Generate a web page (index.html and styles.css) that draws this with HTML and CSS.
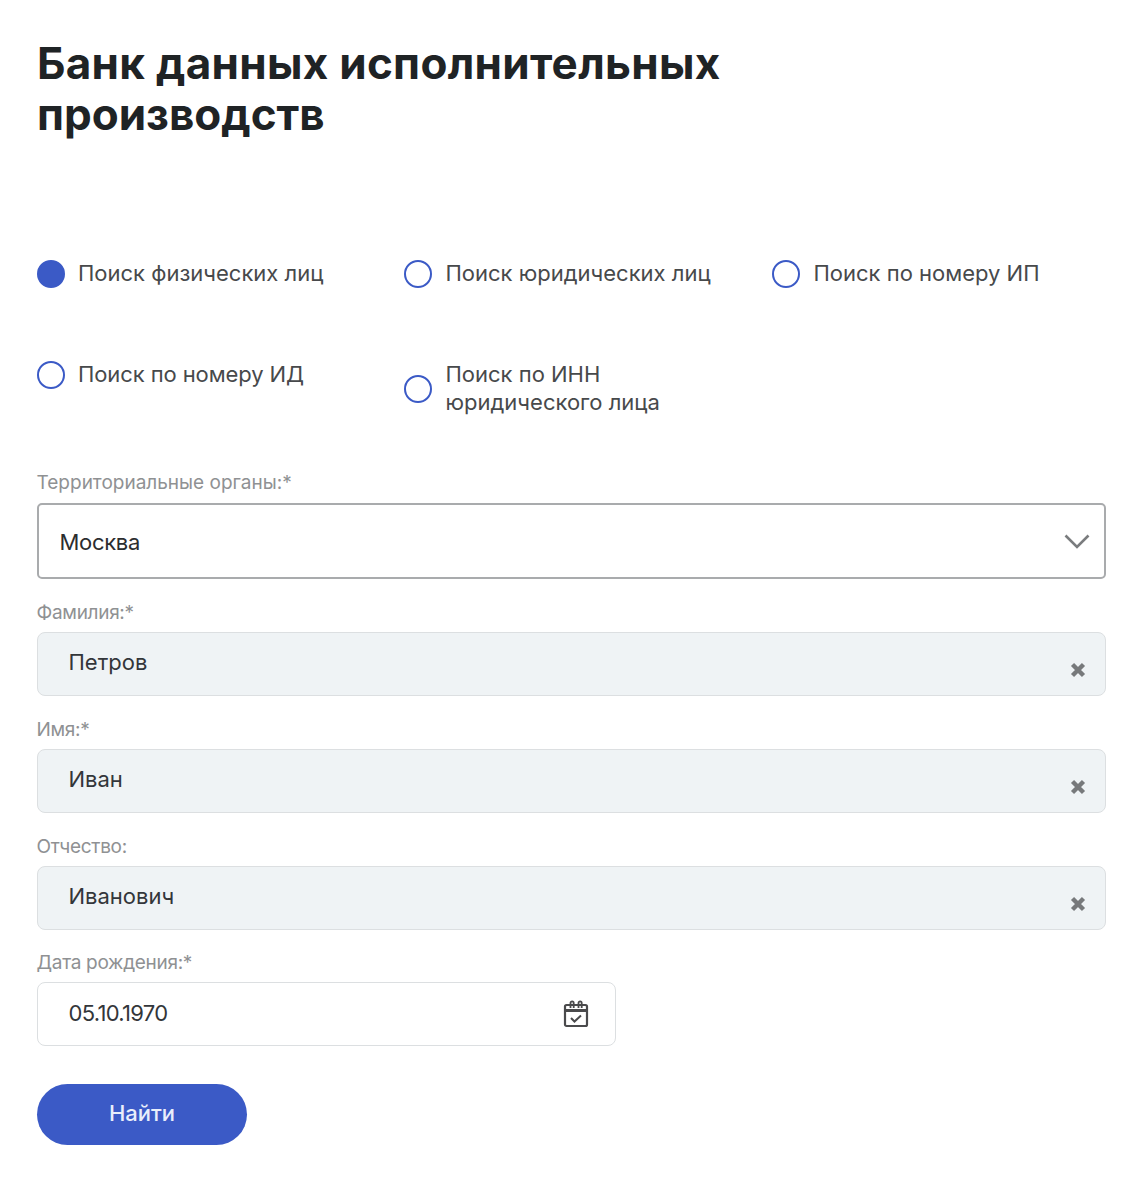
FILE: index.html
```html
<!DOCTYPE html>
<html lang="ru">
<head>
<meta charset="utf-8">
<title>Банк данных исполнительных производств</title>
<link rel="stylesheet" href="styles.css">
</head>
<body>
<main class="page">
  <h1 class="title">Банк данных исполнительных<br><span class="title-second">производств</span></h1>
  <div class="radios">
    <div class="radio-row">
      <div class="radio radio-on"><span class="dot"></span><span class="radio-text radio-left">Поиск физических лиц</span></div>
      <div class="radio"><span class="dot"></span><span class="radio-text">Поиск юридических лиц</span></div>
      <div class="radio"><span class="dot"></span><span class="radio-text">Поиск по номеру ИП</span></div>
    </div>
    <div class="radio-row">
      <div class="radio"><span class="dot"></span><span class="radio-text radio-left radio-tight">Поиск по номеру ИД</span></div>
      <div class="radio radio-center"><span class="dot"></span><span class="radio-text">Поиск по ИНН<br>юридического лица</span></div>
    </div>
  </div>
  <form class="form">
    <div class="label label-first">Территориальные органы:*</div>
    <div class="select"><span class="select-value">Москва</span>
      <svg class="chevron" width="26" height="15" viewBox="0 0 26 15"><path d="M1.5 1.5 13 13 24.5 1.5" fill="none" stroke="#7a7c7e" stroke-width="2.6"/></svg>
    </div>
    <div class="label label-tight">Фамилия:*</div>
    <div class="field"><span class="value">Петров</span>
      <svg class="clear" width="16" height="16" viewBox="0 0 16 16"><path d="M2.5 2.5l11 11M13.5 2.5l-11 11" stroke="#77797b" stroke-width="4.4"/></svg>
    </div>
    <div class="label label-tight">Имя:*</div>
    <div class="field"><span class="value">Иван</span>
      <svg class="clear" width="16" height="16" viewBox="0 0 16 16"><path d="M2.5 2.5l11 11M13.5 2.5l-11 11" stroke="#77797b" stroke-width="4.4"/></svg>
    </div>
    <div class="label label-tight">Отчество:</div>
    <div class="field"><span class="value">Иванович</span>
      <svg class="clear" width="16" height="16" viewBox="0 0 16 16"><path d="M2.5 2.5l11 11M13.5 2.5l-11 11" stroke="#77797b" stroke-width="4.4"/></svg>
    </div>
    <div class="label label-tight label-date">Дата рождения:*</div>
    <div class="field field-date"><span class="value value-date">05.10.1970</span>
      <svg class="calendar" width="26" height="28" viewBox="0 0 26 28"><g fill="none" stroke="#4a4a4c"><rect x="2" y="5" width="22" height="21" rx="1.5" stroke-width="2.2"/><path d="M2 10.5h22" stroke-width="3"/><path d="M7.5 8V3a1.6 1.6 0 0 1 3.2 0v5M15.5 8V3a1.6 1.6 0 0 1 3.2 0v5" stroke-width="1.8"/><path d="M8 18l3.5 3.5 6.5-6" stroke-width="2"/></g></svg>
    </div>
    <button class="submit" type="button">Найти</button>
  </form>
</main>
</body>
</html>
```
FILE: styles.css
```css
* { box-sizing: border-box; }
html, body { margin: 0; padding: 0; background: #fff; }
body { font-family: Inter, "Noto Sans", sans-serif; color: #2b2d2f; }
.page { width: 1143px; height: 1200px; padding: 38px 37px 0; overflow: hidden; }
.title { margin: 0; font-size: 44px; line-height: 51px; font-weight: 700; color: #1f2325; letter-spacing: 0.3px; }
.title-second { letter-spacing: 0; }
.radios { margin-top: 119px; display: flex; flex-direction: column; }
.radio-row { display: grid; grid-template-columns: 367px 368px 1fr; height: 101px; align-items: start; }
.radio { display: flex; align-items: flex-start; gap: 13.5px; font-size: 22px; line-height: 28px; color: #47494b; }
.radio-center { align-items: center; }
.dot { width: 28px; height: 28px; border-radius: 50%; border: 2.8px solid #3b5ac6; flex: none; margin-top: 1px; }
.radio-on .dot { background: #3b5ac6; }
.radio-text { display: block; }
.radio-left { margin-left: -0.5px; }
.radio-tight { letter-spacing: -0.1px; }
.form { display: flex; flex-direction: column; margin-top: 10px; }
.label { font-size: 19px; line-height: 24px; color: #8f9193; margin: 22px 0 7px -0.5px; height: 24px; }
.label-first { margin: 0 0 8px -0.5px; }
.label-tight { letter-spacing: -0.3px; }
.label-date { margin-top: 21px; }
.select { height: 76px; border: 2px solid #a9abad; border-radius: 5px; display: flex; align-items: center; justify-content: space-between; padding: 0 14px 0 21px; font-size: 22px; color: #2b2d2f; }
.select-value { letter-spacing: -0.3px; position: relative; top: 1px; left: -0.5px; }
.field { height: 64px; width: 1069px; background: #eff3f5; border: 1px solid #dcdfe1; border-radius: 8px; padding: 0 19px 0 31px; display: flex; align-items: center; justify-content: space-between; font-size: 22px; color: #33363a; }
.value { position: relative; top: -2px; left: -0.5px; }
.clear { position: relative; top: 6px; }
.field-date { width: 579px; background: #fff; padding-right: 26px; }
.value-date { letter-spacing: -0.7px; top: -1px; }
.submit { width: 210px; height: 61px; margin-top: 38px; padding: 0 0 3px; border: 0; border-radius: 31px; background: #3b5ac6; color: #e9eefb; font: 500 22px Inter, "Noto Sans", sans-serif; }
```
